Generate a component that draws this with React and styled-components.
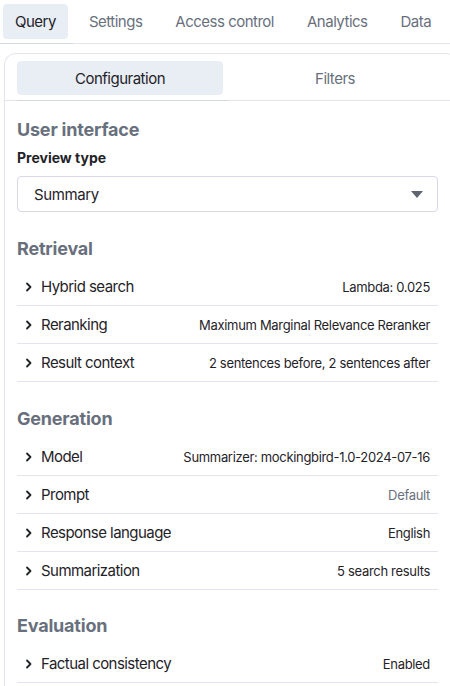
import React from "react";
import styled, { createGlobalStyle } from "styled-components";

const GlobalStyle = createGlobalStyle`
  body {
    margin: 0;
    background: #ffffff;
    font-family: Inter, "Noto Sans", sans-serif;
    color: #1f2328;
    -webkit-font-smoothing: antialiased;
  }
`;

const Page = styled.div`
  width: 450px;
  height: 686px;
  overflow: hidden;
  padding-top: 4px;
  box-sizing: border-box;
`;

const TabBar = styled.div`
  display: flex;
  gap: 9px;
  padding-left: 3px;
  border-bottom: 1px solid #e3e4f0;
`;

const Tab = styled.div`
  position: relative;
  padding: 0 12px;
  height: 35px;
  margin-bottom: 4px;
  display: flex;
  align-items: center;
  font-size: 15px;
  letter-spacing: -0.5px;
  border-radius: 4px;
  color: ${(p) => (p.$active ? "#1f2328" : "#69707d")};
  background: ${(p) => (p.$active ? "#e9eef5" : "transparent")};
  white-space: nowrap;

  &::after {
    content: "";
    display: ${(p) => (p.$active ? "block" : "none")};
    position: absolute;
    left: -3px;
    right: -5px;
    bottom: -5px;
    height: 1px;
    background: #d3d6e4;
  }
`;

const Card = styled.div`
  margin: 9px -8px 0 4px;
  border: 1px solid #e3e4f0;
  border-radius: 12px 12px 0 0;
  border-bottom: none;
  padding: 7px 19px 0 12px;
  height: 700px;
`;

const SubTabBar = styled.div`
  display: grid;
  grid-template-columns: 1fr 1fr;
  column-gap: 9px;
  margin: 0 -19px 0 -12px;
  padding: 0 19px 0 12px;
  border-bottom: 1px solid #e3e4f0;
`;

const SubTab = styled.div`
  position: relative;
  height: 34px;
  margin-bottom: 5px;
  display: flex;
  align-items: center;
  justify-content: center;
  font-size: 15px;
  letter-spacing: -0.5px;
  border-radius: 4px;
  color: ${(p) => (p.$active ? "#1f2328" : "#69707d")};
  background: ${(p) => (p.$active ? "#e9eef5" : "transparent")};

  &::after {
    content: "";
    display: ${(p) => (p.$active ? "block" : "none")};
    position: absolute;
    left: 0;
    right: -5px;
    bottom: -6px;
    height: 1px;
    background: #d3d6e4;
  }
`;

const Section = styled.section`
  padding-top: ${(p) => p.$top || 16}px;
`;

const Heading = styled.h2`
  margin: 0;
  font-size: 18px;
  font-weight: 700;
  letter-spacing: -0.2px;
  color: #69707d;
  line-height: 24px;
`;

const Label = styled.div`
  margin-top: 6px;
  font-size: 14px;
  font-weight: 700;
  line-height: 20px;
`;

const Select = styled.div`
  margin-top: 8px;
  height: 36px;
  box-sizing: border-box;
  border: 1px solid #d8d9e8;
  border-radius: 4px;
  display: flex;
  align-items: center;
  justify-content: space-between;
  padding: 0 14px 0 16px;
  font-size: 15px;
  letter-spacing: -0.4px;
`;

const Caret = styled.span`
  width: 0;
  height: 0;
  border-left: 6px solid transparent;
  border-right: 6px solid transparent;
  border-top: 7px solid #5f6672;
`;

const List = styled.div`
  margin-top: 7px;
`;

const Row = styled.div`
  display: flex;
  align-items: center;
  height: 38px;
  box-sizing: border-box;
  border-bottom: 1px solid #e3e4f3;
  padding: 0 8px 0 6px;
`;

const Chevron = styled.svg`
  width: 12px;
  height: 12px;
  flex: none;
  margin-right: 6px;
`;

const RowLabel = styled.span`
  font-size: 15px;
  letter-spacing: -0.55px;
  flex: 1;
  white-space: nowrap;
`;

const RowValue = styled.span`
  font-size: 13px;
  letter-spacing: -0.32px;
  white-space: nowrap;
  color: ${(p) => (p.$muted ? "#69707d" : "#1f2328")};
`;

const ChevronIcon = () => (
  <Chevron viewBox="0 0 12 12">
    <path
      d="M4 2.5 L7.5 6 L4 9.5"
      fill="none"
      stroke="#1f2328"
      strokeWidth="1.8"
      strokeLinecap="round"
      strokeLinejoin="round"
    />
  </Chevron>
);

const sections = [
  {
    title: "Retrieval",
    rows: [
      { label: "Hybrid search", value: "Lambda: 0.025" },
      { label: "Reranking", value: "Maximum Marginal Relevance Reranker" },
      { label: "Result context", value: "2 sentences before, 2 sentences after" },
    ],
  },
  {
    title: "Generation",
    rows: [
      { label: "Model", value: "Summarizer: mockingbird-1.0-2024-07-16" },
      { label: "Prompt", value: "Default", muted: true },
      { label: "Response language", value: "English" },
      { label: "Summarization", value: "5 search results" },
    ],
  },
  {
    title: "Evaluation",
    rows: [{ label: "Factual consistency", value: "Enabled" }],
  },
];

const tabs = ["Query", "Settings", "Access control", "Analytics", "Data"];

export default function App() {
  return (
    <Page>
      <GlobalStyle />
      <TabBar>
        {tabs.map((t, i) => (
          <Tab key={t} $active={i === 0}>
            {t}
          </Tab>
        ))}
      </TabBar>
      <Card>
        <SubTabBar>
          <SubTab $active>Configuration</SubTab>
          <SubTab>Filters</SubTab>
        </SubTabBar>
        <Section $top={17}>
          <Heading>User interface</Heading>
          <Label>Preview type</Label>
          <Select>
            Summary
            <Caret />
          </Select>
        </Section>
        {sections.map((s, i) => (
          <Section key={s.title} $top={i === 2 ? 24 : 25}>
            <Heading>{s.title}</Heading>
            <List>
              {s.rows.map((r) => (
                <Row key={r.label}>
                  <ChevronIcon />
                  <RowLabel>{r.label}</RowLabel>
                  <RowValue $muted={r.muted}>{r.value}</RowValue>
                </Row>
              ))}
            </List>
          </Section>
        ))}
      </Card>
    </Page>
  );
}
